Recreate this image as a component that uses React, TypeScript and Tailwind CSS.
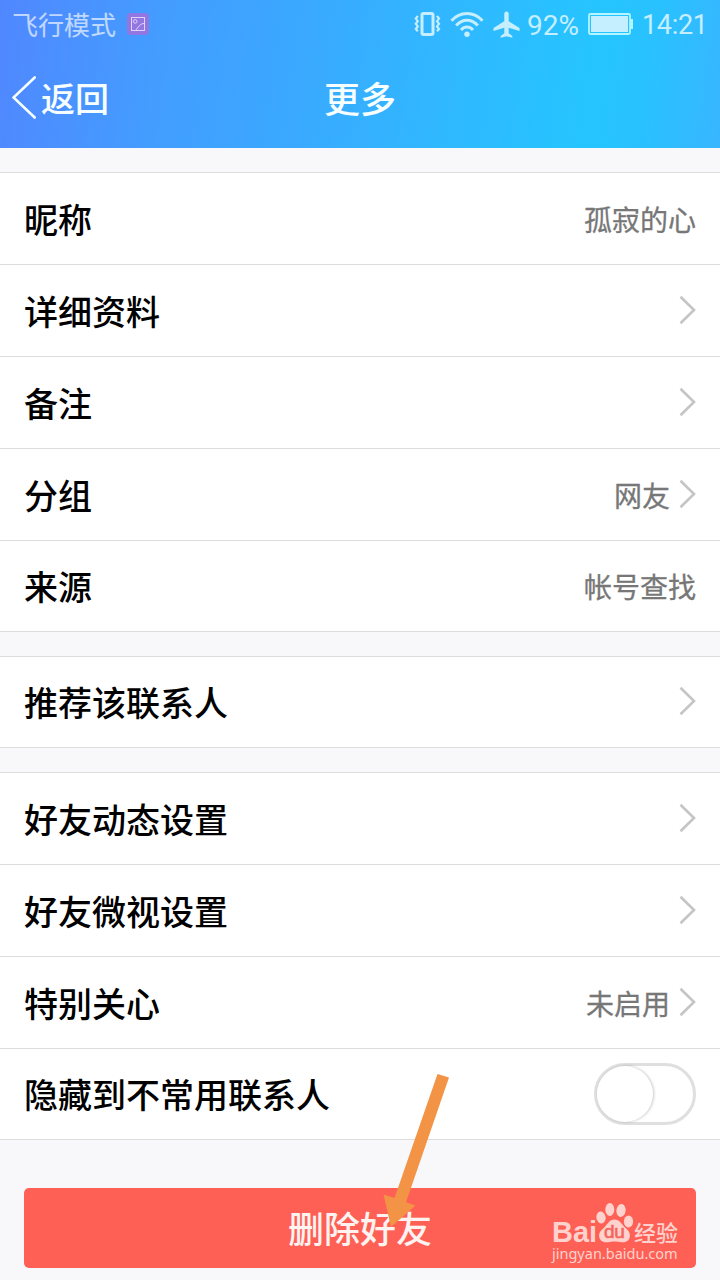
interface RowData {
  label: string;
  value?: string;
  arrow?: boolean;
  toggle?: boolean;
}

const groups: RowData[][] = [
  [
    { label: "昵称", value: "孤寂的心" },
    { label: "详细资料", arrow: true },
    { label: "备注", arrow: true },
    { label: "分组", value: "网友", arrow: true },
    { label: "来源", value: "帐号查找" },
  ],
  [{ label: "推荐该联系人", arrow: true }],
  [
    { label: "好友动态设置", arrow: true },
    { label: "好友微视设置", arrow: true },
    { label: "特别关心", value: "未启用", arrow: true },
    { label: "隐藏到不常用联系人", toggle: true },
  ],
];

const StatusBar = () => (
  <div className="flex h-[50px] items-center pl-3 pr-[13px] text-white/65">
    <span className="text-[26px] leading-[48px] pb-0.5">飞行模式</span>
    <span className="ml-[11px] mb-0.5 flex h-[22px] w-[22px] items-center justify-center rounded bg-[#9277e2]">
      <svg width="14" height="14" viewBox="0 0 14 14" fill="none" stroke="#e3d3fa" strokeWidth="1">
        <rect x="0.5" y="0.5" width="13" height="13" />
        <circle cx="4.2" cy="4.4" r="1.8" />
        <path d="M4.5 13.5 8.5 8.5 10.2 7.2 13.5 6.2" />
      </svg>
    </span>
    <div className="ml-auto flex items-center text-[#c5eeff]">
      <svg className="mb-[2px]" width="27" height="26" viewBox="0 0 27 26" fill="none" stroke="currentColor">
        <rect x="8" y="2.5" width="11" height="21" rx="1.5" strokeWidth="3" />
        <path d="M3.8 5 1.8 7.6l2 2.6-2 2.6 2 2.6-2 2.6 2 2.2" strokeWidth="2.2" />
        <path d="M23 5l2 2.6-2 2.6 2 2.6-2 2.6 2 2.6-2 2.2" strokeWidth="2.2" />
      </svg>
      <svg className="ml-[9px]" width="34" height="26" viewBox="0 0 34 26" fill="none" stroke="currentColor" strokeWidth="3">
        <path d="M1.5 8.8C10 -.9 24 -.9 32.5 8.8" />
        <path d="M6.2 13.5C12.5 6.5 21.5 6.5 27.8 13.5" />
        <path d="M11 18C14.5 14.1 19.5 14.1 23 18" />
        <circle cx="17" cy="22.3" r="2.7" fill="currentColor" stroke="none" />
      </svg>
      <svg className="ml-[9px] mb-[2px]" width="27" height="27" viewBox="0 0 27 27" fill="currentColor">
        <path d="M13.500.5c1.500 0 2.200 1.200 2.200 2.600v7.200L26.500 17v3l-10.800-3.300v5.600l3.600 2.700v1.800l-5.800-1.600-5.800 1.600V25l3.600-2.700v-5.600L.5 20v-3l10.800-6.700V3.100c0-1.400.7-2.600 2.200-2.600Z" />
      </svg>
      <span className="ml-[7px] w-[53px] whitespace-nowrap pt-0.5 font-[Roboto] text-[28px] leading-[48px]">92%</span>
      <svg className="ml-[8px] mb-[2px]" width="45" height="24" viewBox="0 0 45 24">
        <rect x="1" y="2" width="41" height="20" rx="1.5" fill="none" stroke="#b4f6ff" strokeWidth="1.8" />
        <rect x="3" y="4" width="37" height="16" fill="currentColor" />
        <path d="M42.5 7H45v10h-2.500z" fill="#b4f6ff" />
      </svg>
      <span className="ml-[9px] w-[65px] whitespace-nowrap font-[Roboto] text-[27px] tracking-[-0.3px] leading-[50px]">14:21</span>
    </div>
  </div>
);

const Header = () => (
  <header className="h-[148px] bg-[linear-gradient(98deg,#5087ff_0%,#4b90ff_9%,#439dff_23%,#3aa9ff_42%,#30b8ff_62%,#25c5ff_82%,#29c1ff_89%,#38b6ff_100%)]">
    <StatusBar />
    <div className="grid h-[96px] grid-cols-3 items-center text-[#f7feff]">
      <div className="flex items-center pl-3">
        <svg width="24" height="44" viewBox="0 0 24 44" fill="none" stroke="currentColor" strokeWidth="2.6" strokeLinecap="round">
          <path d="M22.7 1.5 1.5 21.5l21.2 20" />
        </svg>
        <span className="ml-[5px] text-[34px] font-medium leading-[50px]">返回</span>
      </div>
      <h1 className="text-center text-[36px] font-medium leading-[48px] pb-0.5">更多</h1>
    </div>
  </header>
);

const Chevron = () => (
  <svg className="ml-2 mb-[2px]" width="18" height="30" viewBox="0 0 18 30" fill="none" stroke="#c5c5c5" strokeWidth="2.6">
    <path d="M2.5 1.8 16 15 2.5 28.2" />
  </svg>
);

const Toggle = () => (
  <div className="flex h-[62px] w-[102px] items-center rounded-full border-[3px] border-[#dfdfdf] bg-white">
    <div className="h-[56px] w-[56px] rounded-full bg-white shadow-[1px_0_3px_rgba(0,0,0,0.22)]" />
  </div>
);

const Row = ({ label, value, arrow, toggle }: RowData) => (
  <li className="flex h-[92px] items-center border-t border-[#dcdcde] px-6 last:border-b">
    <span className="text-[34px] font-medium leading-[50px] text-black">{label}</span>
    <div className="ml-auto flex items-center">
      {value && (
        <span className="text-[28px] leading-[40px] text-[#777] [-webkit-text-stroke:0.3px_#777]">{value}</span>
      )}
      {arrow && <Chevron />}
      {toggle && <Toggle />}
    </div>
  </li>
);

const Watermark = () => (
  <div className="absolute left-[528px] top-[14px] text-[#ffd2cd]">
    <div className="flex h-[42px] items-end whitespace-nowrap">
      <span className="w-[44px] font-['Liberation_Sans'] text-[29px] font-bold leading-[24px]">Bai</span>
      <div className="relative h-[42px] w-[38px]">
        <svg width="38" height="42" viewBox="0 0 38 42" fill="currentColor">
          <ellipse cx="5" cy="15.5" rx="4.6" ry="6" transform="rotate(-10 5 15.5)" />
          <ellipse cx="13.8" cy="7.5" rx="4.5" ry="6.5" />
          <ellipse cx="25" cy="8.5" rx="4.6" ry="6.5" transform="rotate(8 25 8.5)" />
          <ellipse cx="32.5" cy="19.5" rx="4.6" ry="6" />
          <path d="M18.5 17.500c5 0 7 4.500 10.500 8 3 2.800 5.500 5 4.800 9.300-.6 4.200-4 5.700-7.800 5.500-3-.3-5-.8-7.500-.8s-5 .7-8 .8c-4 .2-7-2-7.400-6-.3-4.200 2.400-6 5.400-9 3-3.300 5-7.800 10-7.800Z" />
        </svg>
        <span className="absolute left-[8px] top-[21px] font-['Liberation_Sans'] text-[19px] leading-[18px] tracking-[-0.3px] text-[#f4655c] [-webkit-text-stroke:0.6px_#f4655c]">
          du
        </span>
      </div>
      <span className="text-[22px] font-medium leading-[26px]">经验</span>
    </div>
    <div className="font-['Noto_Sans'] text-[14.5px] leading-[18px]">jingyan.baidu.com</div>
  </div>
);

const App = () => {
  return (
    <div className="relative h-[1280px] w-[720px] overflow-hidden bg-[#f8f8fb] font-['Noto_Sans_CJK_SC',sans-serif]">
      <Header />
      <main className="flex flex-col gap-6 pt-6">
        {groups.map((rows, i) => (
          <ul key={i} className="bg-white">
            {rows.map((row) => (
              <Row key={row.label} {...row} />
            ))}
          </ul>
        ))}
      </main>
      <div className="relative mx-6 mt-12">
        <button className="h-20 w-full rounded-[5px] bg-[#fe6056] pb-0.5 text-[36px] font-medium text-[#fff3f1]">
          删除好友
        </button>
        <Watermark />
      </div>
      {/* arrow pointing at the delete button */}
      <svg className="absolute left-[370px] top-[1060px]" width="90" height="180" viewBox="0 0 90 180" fill="#f29345">
        <path d="M67.5 14 79 17.5 36 142.300 45.5 145.5 21 167 13.5 134.5 24.5 138Z" />
      </svg>
    </div>
  );
};

export default App;
